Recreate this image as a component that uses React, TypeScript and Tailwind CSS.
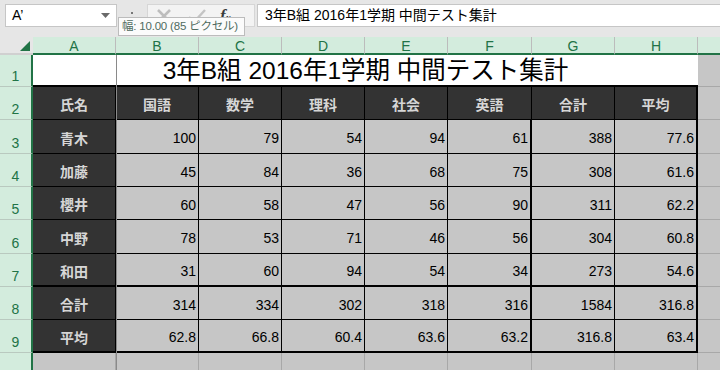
import React from "react";

const FONT = "font-['Liberation_Sans','Noto_Sans_CJK_JP',sans-serif]";

const COLS = [
	{ key: "A", w: "w-[83px]" },
	{ key: "B", w: "w-[83px]" },
	{ key: "C", w: "w-[83px]" },
	{ key: "D", w: "w-[83px]" },
	{ key: "E", w: "w-[83px]" },
	{ key: "F", w: "w-[84px]" },
	{ key: "G", w: "w-[83px]" },
	{ key: "H", w: "w-[83px]" },
];

const HEADS = ["氏名", "国語", "数学", "理科", "社会", "英語", "合計", "平均"];

const ROWS: { n: number; h: string; thick: boolean; name: string; vals: string[] }[] = [
	{ n: 3, h: "h-[34px]", thick: false, name: "青木", vals: ["100", "79", "54", "94", "61", "388", "77.6"] },
	{ n: 4, h: "h-[33px]", thick: false, name: "加藤", vals: ["45", "84", "36", "68", "75", "308", "61.6"] },
	{ n: 5, h: "h-[33px]", thick: false, name: "櫻井", vals: ["60", "58", "47", "56", "90", "311", "62.2"] },
	{ n: 6, h: "h-[34px]", thick: false, name: "中野", vals: ["78", "53", "71", "46", "56", "304", "60.8"] },
	{ n: 7, h: "h-[33px]", thick: true, name: "和田", vals: ["31", "60", "94", "54", "34", "273", "54.6"] },
	{ n: 8, h: "h-[33px]", thick: false, name: "合計", vals: ["314", "334", "302", "318", "316", "1584", "316.8"] },
	{ n: 9, h: "h-[33px]", thick: true, name: "平均", vals: ["62.8", "66.8", "60.4", "63.6", "63.2", "316.8", "63.4"] },
];

const TITLE = "3年B組 2016年1学期 中間テスト集計";

const RowHead = ({ n, h }: { n?: number; h: string }) => (
	<div
		className={`${h} w-[33px] shrink-0 flex items-end justify-center pb-[3px] bg-[#d3ecdd] border-b border-[#b9c9bf] border-r-2 border-r-[#217346] text-[14px] leading-none text-[#217346]`}
	>
		{n}
	</div>
);

const Filler = ({ h }: { h: string }) => <div className={`${h} flex-1 bg-[#c6c6c6] border-b border-[#a8a8a8]`} />;

export default function App() {
	return (
		<div className={`${FONT} relative w-[720px] h-[370px] overflow-hidden bg-[#e6e6e6] select-none`}>
			{/* formula bar */}
			<div className="h-[37px] flex items-start pt-[4px] pl-[5px]">
				<div className="w-[112px] h-[23px] bg-white border border-[#c6c6c6] flex items-center justify-between pl-[6px] pr-[6px] text-[14px] text-black">
					<span>A&#8217;</span>
					<svg width="9" height="6" viewBox="0 0 9 6">
						<polygon points="0,0 9,0 4.5,5" fill="#6a6a6a" />
					</svg>
				</div>
				<div className="w-[30px] h-[23px] flex items-center justify-center">
					<div className="flex flex-col gap-[4px]">
						<span className="w-[2px] h-[2px] bg-[#777]" />
						<span className="w-[2px] h-[2px] bg-[#777]" />
					</div>
				</div>
				<div className="w-[108px] h-[23px] bg-[#f3f3f3] border border-[#d6d6d6] flex items-start pt-[2px] pl-[8px]">
					<svg width="16" height="14" viewBox="0 0 16 14" className="mr-[16px] mt-[2px]">
						<path d="M2 1 L14 13 M14 1 L2 13" stroke="#bdbdbd" strokeWidth="2.6" />
					</svg>
					<svg width="18" height="14" viewBox="0 0 18 14" className="mr-[14px] mt-[2px]">
						<path d="M1 8 L6 13 L17 1" fill="none" stroke="#c4c4c4" strokeWidth="2.4" />
					</svg>
					<span className="font-['Liberation_Serif',serif] italic font-bold text-[17px] leading-none text-[#3a3a3a]">
						f<span className="text-[10px]">x</span>
					</span>
				</div>
				<div className="ml-[2px] flex-1 h-[23px] bg-white border border-[#c6c6c6] border-r-0 flex items-center pl-[7px] text-[14px] text-black">
					{TITLE}
				</div>
			</div>

			{/* tooltip */}
			<div className="absolute left-[118px] top-[17px] w-[127px] h-[19px] bg-[#fbfbfb] border border-[#bcbcbc] flex items-center pl-[3px] text-[11.5px] tracking-[-0.2px] text-[#4f6b60] whitespace-nowrap overflow-hidden z-20">
				幅: 10.00 (85 ピクセル)
			</div>

			{/* column headers */}
			<div className="flex h-[18px]">
				<div className="w-[33px] shrink-0 relative border-b-2 border-[#d0d0d0]">
					<svg width="10" height="10" viewBox="0 0 10 10" className="absolute left-[20px] top-[4px]">
						<polygon points="10,0 10,10 0,10" fill="#217346" />
					</svg>
				</div>
				{COLS.map(c => (
					<div
						key={c.key}
						className={`${c.w} shrink-0 flex items-center justify-center pt-[2px] bg-[#d3ecdd] border-r border-[#bcbcbc] border-b-2 border-b-[#217346] text-[14px] text-[#217346]`}
					>
						{c.key}
					</div>
				))}
				<div className="flex-1 bg-[#d3ecdd] border-b-2 border-[#217346]" />
			</div>

			{/* row 1: title */}
			<div className="flex">
				<RowHead n={1} h="h-[32px]" />
				<div className="h-[32px] w-[665px] shrink-0 bg-white border-b-2 border-black flex items-center justify-center pt-[2px] text-[24.5px] leading-none text-black whitespace-nowrap">
					{TITLE}
				</div>
				<Filler h="h-[32px]" />
			</div>

			{/* row 2: headings */}
			<div className="flex">
				<RowHead n={2} h="h-[33px]" />
				{HEADS.map((t, i) => (
					<div
						key={t}
						className={`${COLS[i].w} h-[33px] shrink-0 bg-[#333333] border-b border-black ${
							i === 7 ? "border-r-2" : "border-r"
						} border-r-black flex items-center justify-center pt-[3px] font-['Noto_Sans_CJK_JP',sans-serif] font-bold text-[14px] text-[#d6d6d6]`}
					>
						{t}
					</div>
				))}
				<Filler h="h-[33px]" />
			</div>

			{/* data rows */}
			{ROWS.map(r => (
				<div key={r.n} className="flex">
					<RowHead n={r.n} h={r.h} />
					<div
						className={`${r.h} w-[83px] shrink-0 bg-[#333333] border-r border-black ${
							r.thick ? "border-b-2" : "border-b"
						} border-b-black flex items-center justify-center pt-[3px] font-['Noto_Sans_CJK_JP',sans-serif] font-bold text-[14px] text-[#d6d6d6]`}
					>
						{r.name}
					</div>
					{r.vals.map((v, i) => (
						<div
							key={i}
							className={`${COLS[i + 1].w} ${r.h} shrink-0 bg-[#c6c6c6] ${
								i === 4 || i === 6 ? "border-r-2" : "border-r"
							} border-r-black ${
								r.thick ? "border-b-2" : "border-b"
							} border-b-black flex items-center justify-end pr-[2px] pt-[4px] text-[14px] text-black`}
						>
							{v}
						</div>
					))}
					<Filler h={r.h} />
				</div>
			))}

			{/* row 10, partly visible */}
			<div className="flex">
				<RowHead h="h-[20px]" />
				{COLS.map(c => (
					<div key={c.key} className={`${c.w} h-[20px] shrink-0 bg-[#c6c6c6] border-r border-[#a8a8a8]`} />
				))}
				<div className="h-[20px] flex-1 bg-[#c6c6c6]" />
			</div>

			{/* column resize guide */}
			<div className="absolute left-[116px] top-[55px] bottom-0 w-px bg-[#8a8a8a] z-10" />
		</div>
	);
}
